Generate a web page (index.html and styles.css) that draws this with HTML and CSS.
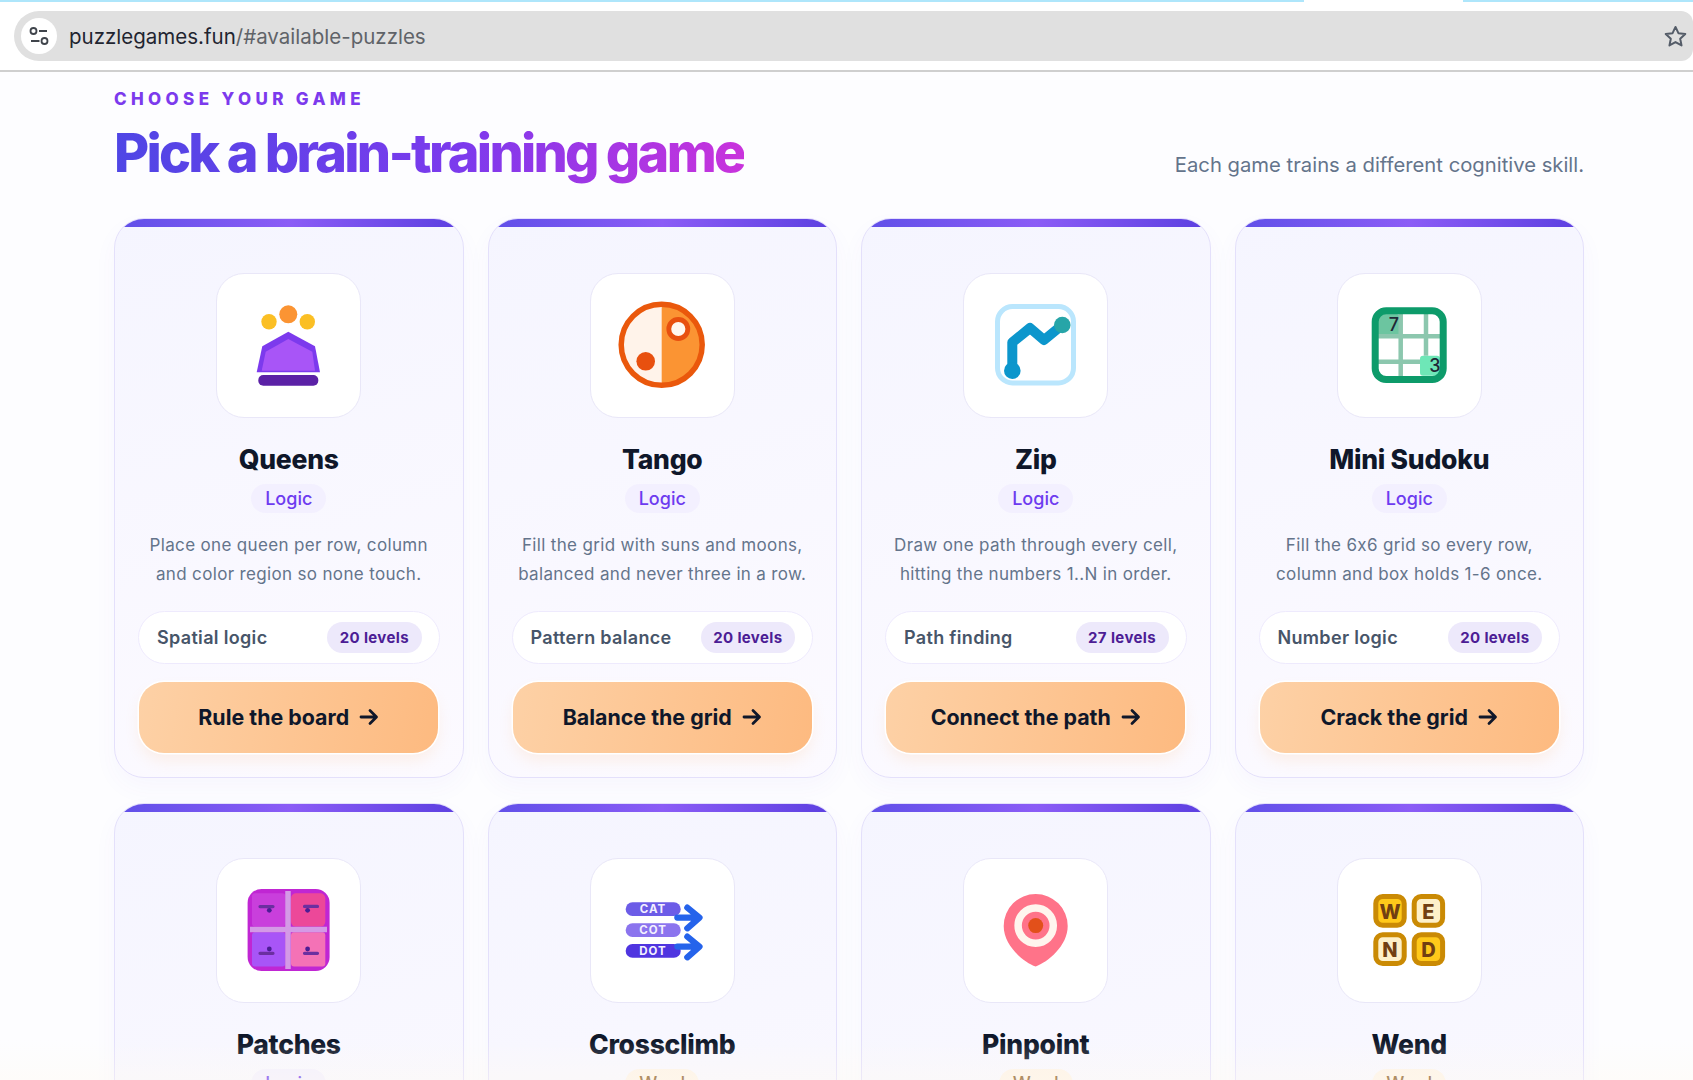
FILE: index.html
```html
<!DOCTYPE html>
<html lang="en">
<head>
<meta charset="utf-8">
<title>Puzzle Games</title>
<link rel="stylesheet" href="styles.css">
</head>
<body>
<div class="viewport">
  <header class="chrome">
    <div class="tabs-strip"><span class="strip strip-a"></span><span class="strip-gap"></span><span class="strip strip-b"></span></div>
    <div class="address">
      <span class="site-btn">
        <svg viewBox="0 0 36 36" class="site-icon"><circle cx="12.5" cy="13" r="3"/><path d="M18 13h8M10 23h8.5"/><circle cx="23.5" cy="23" r="3"/></svg>
      </span>
      <span class="url"><span class="url-host">puzzlegames.fun</span>/#available-puzzles</span>
      <svg viewBox="0 0 24 24" class="star"><path d="M12 2.8l2.8 6 6.6.8-4.9 4.5 1.3 6.5-5.8-3.3-5.8 3.3 1.3-6.5L2.6 9.6l6.6-.8z"/></svg>
    </div>
  </header>
  <main class="page">
    <div class="section-head">
      <div class="head-text">
        <div class="eyebrow">CHOOSE YOUR GAME</div>
        <h1 class="headline">Pick a brain-training game</h1>
      </div>
      <p class="lede">Each game trains a different cognitive skill.</p>
    </div>
    <div class="grid">
      <article class="card">
        <div class="icon-box"><svg viewBox="0 0 143 143" class="art">
          <circle cx="71.3" cy="41.3" r="9" fill="#fb9433"/><circle cx="52" cy="48.7" r="7.7" fill="#fbbf24"/><circle cx="90.3" cy="48.7" r="7.7" fill="#fbbf24"/>
          <polygon points="71.3,58.7 98,73.3 103,99.3 39.7,99.3 45.3,73.3" fill="#7c3aed"/>
          <polygon points="71.3,66 95.3,78.7 98,97.7 44.7,97.7 48.7,78.7" fill="#a855f7"/>
          <rect x="41.3" y="102" width="60" height="10.7" rx="5" fill="#5b21a6"/>
        </svg></div>
        <h2 class="name">Queens</h2>
        <span class="tag">Logic</span>
        <p class="desc">Place one queen per row, column and color region so none touch.</p>
        <div class="stats"><span class="skill">Spatial logic</span><span class="levels">20 levels</span></div>
        <a class="play">Rule the board<svg viewBox="0 0 20 20" class="arrow"><path d="M2 10h15M11 3.5l6.5 6.5-6.5 6.5"/></svg></a>
      </article>
      <article class="card">
        <div class="icon-box"><svg viewBox="0 0 143 143" class="art">
          <circle cx="71.7" cy="71.8" r="40.5" fill="#fff3ea"/>
          <path d="M71.7 31.3a40.5 40.5 0 0 1 0 81z" fill="#fb9433"/>
          <circle cx="71.7" cy="71.8" r="40.5" fill="none" stroke="#ea580c" stroke-width="5.5"/>
          <circle cx="55.7" cy="88.3" r="9.3" fill="#e8500f"/>
          <circle cx="88.3" cy="56" r="9.5" fill="#fff7f0" stroke="#e8500f" stroke-width="4.8"/>
        </svg></div>
        <h2 class="name">Tango</h2>
        <span class="tag">Logic</span>
        <p class="desc">Fill the grid with suns and moons, balanced and never three in a row.</p>
        <div class="stats"><span class="skill">Pattern balance</span><span class="levels">20 levels</span></div>
        <a class="play">Balance the grid<svg viewBox="0 0 20 20" class="arrow"><path d="M2 10h15M11 3.5l6.5 6.5-6.5 6.5"/></svg></a>
      </article>
      <article class="card">
        <div class="icon-box"><svg viewBox="0 0 143 143" class="art">
          <rect x="33.5" y="33.5" width="76" height="76.5" rx="15" fill="#fff" stroke="#bae6fd" stroke-width="5"/>
          <path d="M48.3 97.7V69.3L66 55l14 12 18.3-15" fill="none" stroke="#0c96cc" stroke-width="10" stroke-linecap="round" stroke-linejoin="round"/>
          <circle cx="48.3" cy="97.7" r="8.3" fill="#0c96cc"/>
          <circle cx="98.3" cy="52" r="8.3" fill="#27a5a8"/>
        </svg></div>
        <h2 class="name">Zip</h2>
        <span class="tag">Logic</span>
        <p class="desc">Draw one path through every cell, hitting the numbers 1..N in order.</p>
        <div class="stats"><span class="skill">Path finding</span><span class="levels">27 levels</span></div>
        <a class="play">Connect the path<svg viewBox="0 0 20 20" class="arrow"><path d="M2 10h15M11 3.5l6.5 6.5-6.5 6.5"/></svg></a>
      </article>
      <article class="card">
        <div class="icon-box"><svg viewBox="0 0 143 143" class="art">
          <rect x="38.2" y="37.8" width="68" height="68.7" rx="11" fill="#fff"/>
          <rect x="41" y="41" width="22" height="23.3" rx="3" fill="#6cc5a0"/>
          <rect x="83" y="82.7" width="20" height="20" rx="3" fill="#6ee7b7"/>
          <path d="M63.7 40v64M89 40v42.7M40 63.3h64M40 88.7h43" stroke="#8cc7ae" stroke-width="4.5" fill="none"/>
          <rect x="38.2" y="37.8" width="68" height="68.7" rx="11" fill="none" stroke="#0d9b6a" stroke-width="7"/>
          <text x="57" y="58" class="sudoku-digit">7</text>
          <text x="98" y="99" class="sudoku-digit">3</text>
        </svg></div>
        <h2 class="name">Mini Sudoku</h2>
        <span class="tag">Logic</span>
        <p class="desc">Fill the 6x6 grid so every row, column and box holds 1-6 once.</p>
        <div class="stats"><span class="skill">Number logic</span><span class="levels">20 levels</span></div>
        <a class="play">Crack the grid<svg viewBox="0 0 20 20" class="arrow"><path d="M2 10h15M11 3.5l6.5 6.5-6.5 6.5"/></svg></a>
      </article>
      <article class="card">
        <div class="icon-box"><svg viewBox="0 0 143 143" class="art">
          <rect x="30.6" y="31" width="82" height="82" rx="14" fill="#c026d3"/>
          <rect x="35" y="35.3" width="33.3" height="33.3" rx="3" fill="#c93fdc"/>
          <rect x="74" y="35.3" width="34.3" height="33.3" rx="5" fill="#ec4899"/>
          <rect x="35" y="74.3" width="33.3" height="34.3" rx="3" fill="#a855f7"/>
          <rect x="74" y="74.3" width="34.3" height="34.3" rx="3" fill="#f472b6"/>
          <path d="M71 33v78M33 71.4h77" stroke="#d49ae6" stroke-width="5.5"/>
          <path d="M43 48.6h13M87.5 48.4h13M43 95.3h13M87.5 95.3h13" stroke="#6b2fa0" stroke-width="3.2" stroke-linecap="round"/>
          <circle cx="52.3" cy="52.3" r="2.4" fill="#4c1d95"/><circle cx="90.6" cy="52.3" r="2.4" fill="#4c1d95"/><circle cx="52.3" cy="91" r="2.4" fill="#4c1d95"/><circle cx="90.6" cy="91" r="2.4" fill="#4c1d95"/>
        </svg></div>
        <h2 class="name">Patches</h2>
        <span class="tag">Logic</span>
      </article>
      <article class="card">
        <div class="icon-box"><svg viewBox="0 0 143 143" class="art">
          <rect x="35.7" y="44.3" width="55" height="13.7" rx="6.8" fill="#6c5ce7"/>
          <rect x="35.7" y="65.3" width="55" height="13.7" rx="6.8" fill="#8b74ee"/>
          <rect x="35.7" y="86" width="55" height="13.7" rx="6.8" fill="#4f35e0"/>
          <text x="63" y="55" class="ladder-word">CAT</text>
          <text x="63" y="76" class="ladder-word">COT</text>
          <text x="63" y="96.7" class="ladder-word">DOT</text>
          <path d="M87.3 59.6h18M97.3 49.6l12.2 10-12.2 10.7M87.3 88.6h18M97.3 78.6l12.2 10-12.2 10.7" fill="none" stroke="#2563eb" stroke-width="6.2" stroke-linecap="round" stroke-linejoin="round"/>
        </svg></div>
        <h2 class="name">Crossclimb</h2>
        <span class="tag tag-word">Word</span>
      </article>
      <article class="card">
        <div class="icon-box"><svg viewBox="0 0 143 143" class="art">
          <path d="M71.7 36a32 32 0 0 1 32 32c0 20-20 36-32 40.6-12-4.6-32-20.6-32-40.6a32 32 0 0 1 32-32z" fill="#ff7389"/>
          <circle cx="71.7" cy="67.6" r="17.6" fill="#ff7389" stroke="#fff5ee" stroke-width="7.5"/>
          <circle cx="71.7" cy="67.6" r="7.5" fill="#e2501a"/>
        </svg></div>
        <h2 class="name">Pinpoint</h2>
        <span class="tag tag-word">Word</span>
      </article>
      <article class="card">
        <div class="icon-box"><svg viewBox="0 0 143 143" class="art">
          <rect x="38.8" y="38.5" width="28.4" height="28.7" rx="7" fill="#ffc91a" stroke="#ca8a04" stroke-width="5"/>
          <rect x="77.2" y="38.5" width="28.4" height="28.7" rx="7" fill="#fef0c9" stroke="#ca8a04" stroke-width="5"/>
          <rect x="38.8" y="76.8" width="28.4" height="28.7" rx="7" fill="#fef0c9" stroke="#ca8a04" stroke-width="5"/>
          <rect x="77.2" y="76.8" width="28.4" height="28.7" rx="7" fill="#ffc91a" stroke="#ca8a04" stroke-width="5"/>
          <text x="53" y="60.5" class="tile-letter">W</text>
          <text x="91.4" y="60.5" class="tile-letter">E</text>
          <text x="53" y="98.8" class="tile-letter">N</text>
          <text x="91.4" y="98.8" class="tile-letter">D</text>
        </svg></div>
        <h2 class="name">Wend</h2>
        <span class="tag tag-word">Word</span>
      </article>
    </div>
  </main>
  <div class="bottom-fade"></div>
</div>
</body>
</html>
```

FILE: styles.css
```css
* { box-sizing: border-box; }
html, body { margin: 0; padding: 0; height: 100%; }
body { font-family: Inter, "Liberation Sans", sans-serif; background: #fdfdff; color: #0f172a; }
.viewport { position: relative; height: 1080px; overflow: hidden; display: flex; flex-direction: column; }

.chrome { height: 72px; flex: none; background: #fff; border-bottom: 2px solid #cfcfcf; }
.tabs-strip { display: flex; height: 2px; }
.strip { background: #aee6fb; }
.strip-a { width: 1304px; }
.strip-gap { width: 159px; }
.strip-b { flex: 1; }
.address { margin: 9px 0 0 14px; height: 50px; background: #e0e0e0; border-radius: 25px 12px 12px 25px; display: flex; align-items: center; padding: 0 5px 0 7px; }
.site-btn { width: 36px; height: 36px; border-radius: 50%; background: #fff; flex: none; }
.site-icon { display: block; width: 36px; height: 36px; fill: none; stroke: #3f444b; stroke-width: 1.8; }
.url { margin-left: 12px; font-size: 20.5px; color: #5f6368; flex: 1; }
.url-host { color: #1f2530; }
.star { width: 25px; height: 25px; fill: none; stroke: #545c68; stroke-width: 1.9; stroke-linejoin: round; flex: none; }

.page { padding: 0 109px 0 114px; }
.section-head { display: flex; justify-content: space-between; align-items: flex-start; height: 146px; }
.head-text { padding-top: 16px; }
.eyebrow { font-size: 17px; line-height: 22px; font-weight: 800; letter-spacing: 0.257em; color: #7c3aed; }
.headline { margin: 10px 0 0; font-size: 54px; line-height: 66px; font-weight: 800; letter-spacing: -0.051em; width: fit-content; background: linear-gradient(90deg, #4f46e5, #7c3aed 55%, #c933dc); -webkit-background-clip: text; background-clip: text; color: transparent; }
.lede { align-self: flex-end; margin: 0 0 39px; font-size: 20.25px; line-height: 28px; color: #64748b; }

.grid { display: grid; grid-template-columns: repeat(4, 1fr); grid-auto-rows: 560px; gap: 25px 24px; }
.card { position: relative; overflow: hidden; display: flex; flex-direction: column; align-items: center; padding: 53.5px 23px 23px; border: 1.5px solid #e4e0fb; border-radius: 30px; background: linear-gradient(165deg, #f5f5ff, #fcfaff); box-shadow: 0 10px 24px rgba(99, 80, 230, 0.04); }
.card::before { content: ""; position: absolute; inset: 0 0 auto 0; height: 8px; background: linear-gradient(90deg, #5f4fe8, #8b5cf6 50%, #5b3fe0); }
.icon-box { width: 145px; height: 145px; flex: none; background: #fff; border: 1.5px solid #e9e7f8; border-radius: 28px; }
.art { display: block; width: 143px; height: 143px; margin: -0.5px; }
.name { margin: 24px 0 0; font-size: 26.5px; line-height: 34px; font-weight: 800; letter-spacing: -0.01em; color: #0f172a; }
.tag { margin-top: 8px; height: 29px; padding: 0 14px; border-radius: 15px; background: #f3f0ff; color: #6d3bf0; font-size: 18px; line-height: 29px; font-weight: 500; }
.tag-word { background: #fdf3e7; color: #8a5a1f; }
.desc { margin: 18px 0 0; font-size: 17px; line-height: 29px; color: #64748b; text-align: center; letter-spacing: 0.02em; }
.stats { margin-top: 22px; width: 100%; height: 53px; flex: none; display: flex; justify-content: space-between; align-items: center; padding: 1px 17px 0 18px; background: #fff; border: 1.5px solid #eeeafd; border-radius: 27px; }
.skill { font-size: 18px; font-weight: 600; letter-spacing: 0.018em; color: #475569; }
.levels { height: 31px; padding: 0 12.5px; border-radius: 16px; background: #ede9fb; color: #4c1d95; font-size: 15px; line-height: 31px; font-weight: 700; letter-spacing: 0.025em; }
.play { margin-top: 18px; width: 299px; height: 71px; flex: none; display: flex; justify-content: center; align-items: center; gap: 10px; border-radius: 25px; background: linear-gradient(100deg, #fdd1a6, #fdba80); font-size: 21.4px; font-weight: 700; color: #0f172a; box-shadow: 0 0 0 1.5px #fff, 0 8px 14px rgba(253, 186, 116, 0.16); }
.arrow { width: 20px; height: 20px; fill: none; stroke: #0f172a; stroke-width: 2.8; stroke-linecap: round; stroke-linejoin: round; }

.sudoku-digit { font-size: 18px; font-weight: 500; fill: #1f2937; text-anchor: middle; }
.ladder-word { font-size: 11.5px; font-weight: 700; fill: #f3f0ff; text-anchor: middle; letter-spacing: 1px; }
.tile-letter { font-size: 20px; font-weight: 800; fill: #713f12; text-anchor: middle; }
.bottom-fade { position: absolute; left: 0; right: 0; bottom: 0; height: 40px; background: linear-gradient(180deg, rgba(255, 250, 240, 0), rgba(255, 250, 240, 0.35)); pointer-events: none; }
```
